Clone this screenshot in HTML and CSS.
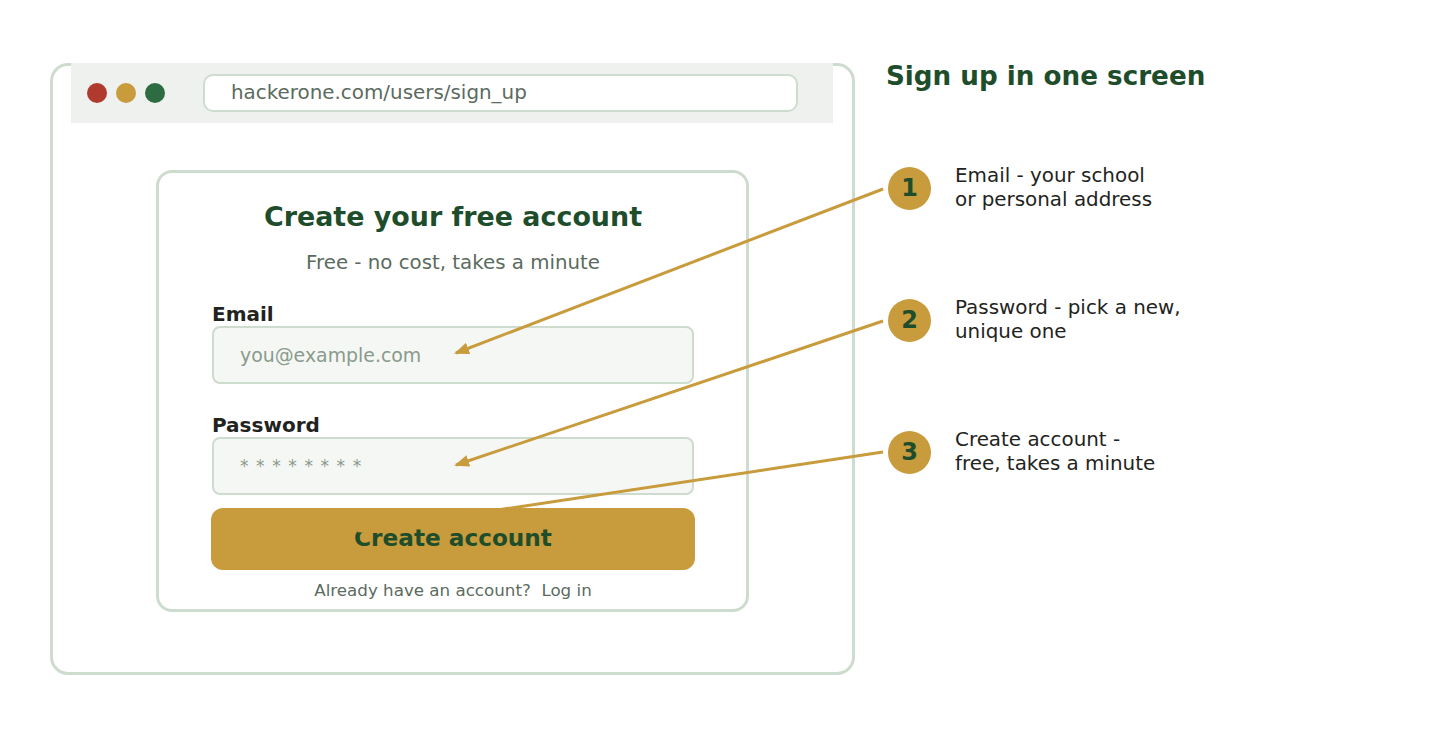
FILE: index.html
```html
<!DOCTYPE html>
<html>
<head>
	<meta charset="utf-8">
	<title>Sign up in one screen</title>
	<link rel="stylesheet" href="styles.css">
</head>
<body>
	<div class="pagina">
		<div class="navegador">
			<div class="barra">
				<span class="bolinha vermelha"></span>
				<span class="bolinha amarela"></span>
				<span class="bolinha verde"></span>
				<div class="endereco">hackerone.com/users/sign_up</div>
			</div>

			<div class="cartao">
				<h1 class="cartao-titulo">Create your free account</h1>
				<p class="cartao-sub">Free - no cost, takes a minute</p>

				<label class="rotulo">Email</label>
				<div class="campo">you@example.com</div>

				<label class="rotulo rotulo-senha">Password</label>
				<div class="campo campo-senha">* * * * * * * *</div>

				<div class="botao">Create account</div>
				<p class="rodape">Already have an account?&nbsp; Log in</p>
			</div>
		</div>

		<div class="lateral">
			<h2 class="lateral-titulo">Sign up in one screen</h2>
			<ul class="passos">
				<li class="passo">
					<span class="numero">1</span>
					<span class="passo-texto">Email - your school<br>or personal address</span>
				</li>
				<li class="passo">
					<span class="numero">2</span>
					<span class="passo-texto">Password - pick a new,<br>unique one</span>
				</li>
				<li class="passo">
					<span class="numero">3</span>
					<span class="passo-texto">Create account -<br>free, takes a minute</span>
				</li>
			</ul>
		</div>
	</div>

	<!-- setas por cima de tudo -->
	<svg class="setas" width="1431" height="738" viewBox="0 0 1431 738">
		<defs>
			<marker id="ponta" markerUnits="userSpaceOnUse" markerWidth="15" markerHeight="12" refX="13" refY="6" orient="auto">
				<path d="M0,0 L15,6 L0,12 z" fill="#c89b3c"/>
			</marker>
		</defs>
		<line x1="883" y1="189" x2="456" y2="353" stroke="#c89b3c" stroke-width="3" marker-end="url(#ponta)"/>
		<line x1="883" y1="321" x2="456" y2="465" stroke="#c89b3c" stroke-width="3" marker-end="url(#ponta)"/>
		<line x1="883" y1="452" x2="358" y2="531" stroke="#c89b3c" stroke-width="3" marker-end="url(#ponta)"/>
	</svg>
</body>
</html>
```

FILE: styles.css
```css
* {
	box-sizing: border-box;
}

body {
	margin: 0;
	background: #ffffff;
	font-family: "DejaVu Sans", Verdana, sans-serif;
	color: #1f2421;
}

.pagina {
	display: flex;
	align-items: flex-start;
	padding: 60px 0 0 50px;
}

.navegador {
	width: 805px;
	height: 612px;
	margin-top: 3px;
	border: 3px solid #cedbcf;
	border-radius: 18px;
}

.barra {
	display: flex;
	align-items: center;
	height: 60px;
	margin: -3px 19px 0 18px;
	padding: 0 35px 0 16px;
	background: #eff1ee;
}

.bolinha {
	width: 20px;
	height: 20px;
	border-radius: 50%;
	margin-right: 9px;
}

.vermelha { background: #b13a2f; }
.amarela { background: #c89b3c; }
.verde { background: #2d6c43; margin-right: 38px; }

.endereco {
	flex-grow: 1;
	height: 38px;
	padding-left: 26px;
	border: 2px solid #cedbcf;
	border-radius: 10px;
	background: #ffffff;
	color: #5b6b5e;
	font-size: 19.9px;
	line-height: 34px;
}

.cartao {
	width: 593px;
	margin: 47px auto 0;
	padding: 28px 52px 9px 53px;
	border: 3px solid #cedbcf;
	border-radius: 16px;
}

.cartao-titulo {
	margin: 0;
	text-align: center;
	color: #1e4d2b;
	font-size: 26.9px;
	line-height: 32px;
}

.cartao-sub {
	margin: 18px 0 0;
	text-align: center;
	color: #5b6b5e;
	font-size: 19.8px;
	line-height: 24px;
}

.rotulo {
	display: block;
	margin-top: 27px;
	font-weight: bold;
	font-size: 20px;
	line-height: 24px;
	color: #1f2421;
}

.rotulo-senha {
	margin-top: 29px;
}

.campo {
	height: 58px;
	padding-left: 26px;
	border: 2px solid #cedbcf;
	border-radius: 8px;
	background: #f5f7f4;
	color: #8a9a8c;
	font-size: 18.9px;
	line-height: 54px;
}

.campo-senha {
	font-size: 17px;
	letter-spacing: 1.1px;
}

.botao {
	height: 62px;
	margin: 13px -1px 0;
	border-radius: 12px;
	background: #c89b3c;
	color: #1e4d2b;
	font-weight: bold;
	font-size: 23.2px;
	line-height: 59px;
	text-align: center;
}

.rodape {
	margin: 10px 0 0;
	text-align: center;
	color: #5b6b5e;
	font-size: 16.7px;
	line-height: 20px;
}

.lateral {
	margin-left: 31px;
}

.lateral-titulo {
	margin: 1px 0 0;
	color: #1e4d2b;
	font-size: 26.2px;
	line-height: 30px;
}

.passos {
	list-style: none;
	margin: 73px 0 0;
	padding: 0;
}

.passo {
	display: flex;
	align-items: center;
	height: 48px;
	margin-bottom: 84px;
}

.numero {
	width: 43px;
	height: 43px;
	margin-left: 2px;
	border-radius: 50%;
	background: #c89b3c;
	color: #1e4d2b;
	font-weight: bold;
	font-size: 24px;
	line-height: 43px;
	text-align: center;
}

.passo-texto {
	margin-left: 24px;
	font-size: 19.9px;
	line-height: 24px;
	color: #1f2421;
}

.setas {
	position: absolute;
	top: 0;
	left: 0;
	pointer-events: none;
}
```
